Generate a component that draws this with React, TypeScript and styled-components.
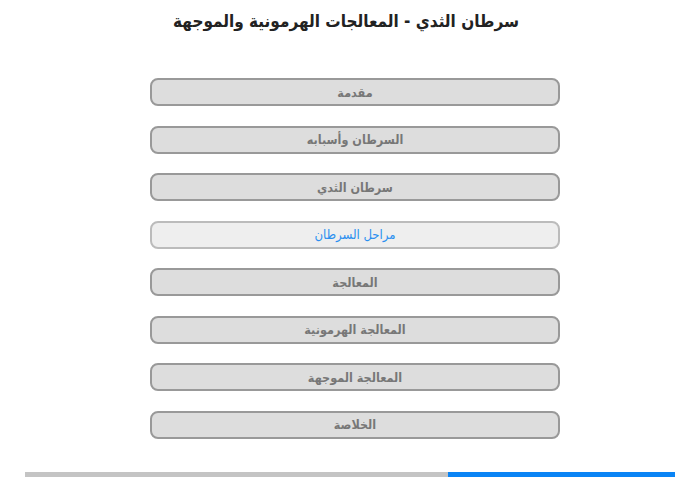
import styled, { createGlobalStyle } from "styled-components";

const GlobalStyle = createGlobalStyle`
  html, body {
    margin: 0;
    padding: 0;
    background: #fff;
  }
  body {
    font-family: "DejaVu Sans Condensed", "DejaVu Sans", sans-serif;
  }
`;

const Page = styled.div`
  width: 700px;
  height: 480px;
  display: flex;
  flex-direction: column;
  direction: rtl;
`;

const Title = styled.h1`
  margin: 10px 0 0;
  padding-right: 8px;
  font-family: "DejaVu Sans Condensed", "DejaVu Sans", sans-serif;
  font-size: 17px;
  font-weight: bold;
  color: #222;
  text-align: center;
  line-height: 22px;
`;

const Menu = styled.nav`
  display: flex;
  flex-direction: column;
  gap: 19.5px;
  margin-top: 46px;
  padding-right: 140px;
`;

const MenuButton = styled.button<{ $active?: boolean }>`
  height: 28px;
  width: 410px;
  box-sizing: border-box;
  border: 2px solid ${(p) => (p.$active ? "#bbbbbb" : "#999999")};
  border-radius: 8px;
  background: ${(p) => (p.$active ? "#eeeeee" : "#dddddd")};
  color: ${(p) => (p.$active ? "#2a8ff0" : "#777777")};
  font-family: "DejaVu Sans Condensed", "DejaVu Sans", sans-serif;
  font-size: ${(p) => (p.$active ? "13px" : "12.5px")};
  font-weight: ${(p) => (p.$active ? "normal" : "bold")};
  text-align: center;
  padding: 0;
  cursor: pointer;
  direction: rtl;
`;

const Progress = styled.div`
  margin: 33px 25px 0;
  height: 5px;
  background: #c4c4c4;
  display: flex;
  direction: rtl;
`;

const ProgressFill = styled.div`
  height: 100%;
  background: #0a84f5;
`;

const items = [
  "مقدمة",
  "السرطان وأسبابه",
  "سرطان الثدي",
  "مراحل السرطان",
  "المعالجة",
  "المعالجة الهرمونية",
  "المعالجة الموجهة",
  "الخلاصة",
];

export default function App() {
  const active = 3;
  const progress = 35;
  return (
    <>
      <GlobalStyle />
      <Page>
        <Title>سرطان الثدي - المعالجات الهرمونية والموجهة</Title>
        <Menu>
          {items.map((label, i) => (
            <MenuButton key={label} $active={i === active}>
              {label}
            </MenuButton>
          ))}
        </Menu>
        <Progress>
          <ProgressFill style={{ width: `${progress}%` }} />
        </Progress>
      </Page>
    </>
  );
}
